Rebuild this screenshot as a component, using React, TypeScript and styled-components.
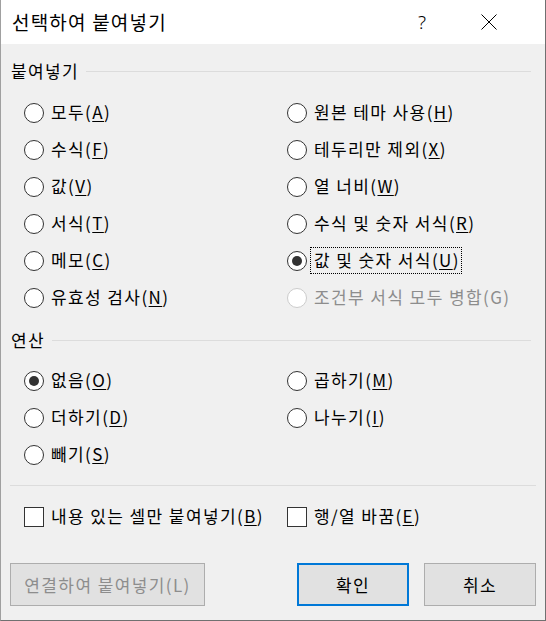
import React from "react";
import styled, { createGlobalStyle } from "styled-components";

const GlobalStyle = createGlobalStyle`
  html, body {
    margin: 0;
    padding: 0;
    background: #ffffff;
  }
  * {
    box-sizing: border-box;
  }
`;

const FONT = `"Noto Sans CJK KR", "Noto Sans", sans-serif`;

const Window = styled.div`
  width: 546px;
  height: 621px;
  display: flex;
  flex-direction: column;
  background: #f0f0f0;
  border-left: 1px solid #a0a0a0;
  border-right: 1px solid #707070;
  border-bottom: 1px solid #707070;
  font-family: ${FONT};
  color: #000;
`;

const TitleBar = styled.div`
  height: 44px;
  flex: none;
  display: flex;
  align-items: center;
  background: #ffffff;
  padding-left: 11px;
`;

const Title = styled.div`
  font-size: 19px;
  letter-spacing: 1.2px;
  line-height: 20px;
  flex: 1;
`;

const HelpButton = styled.div`
  width: 46px;
  text-align: center;
  font-family: "Noto Sans", sans-serif;
  font-weight: 300;
  font-size: 19px;
  line-height: 20px;
`;

const CloseButton = styled.div`
  width: 46px;
  height: 44px;
  display: flex;
  align-items: center;
  justify-content: center;
  margin-left: 21px;
  margin-right: 33px;
`;

const GroupHeader = styled.div<{ $top: number }>`
  display: flex;
  align-items: center;
  height: 22px;
  margin: ${(p) => p.$top}px 14px 0 10px;
  gap: 7px;
  font-size: 17px;
  letter-spacing: 1.4px;
  line-height: 22px;
`;

const Rule = styled.div`
  flex: 1;
  height: 1px;
  background: #dcdcdc;
`;

const OptionGrid = styled.div<{ $top: number; $rows: number }>`
  display: grid;
  grid-template-columns: 263px 1fr;
  grid-auto-flow: column;
  grid-template-rows: ${(p) => `repeat(${p.$rows}, 37px)`};
  margin-top: ${(p) => p.$top}px;
  padding-left: 23px;
`;

const Option = styled.div<{ $disabled?: boolean }>`
  display: flex;
  align-items: center;
  gap: 3px;
  font-size: 17px;
  letter-spacing: 1.4px;
  color: ${(p) => (p.$disabled ? "#8d8d8d" : "#000")};
`;

const RadioCircle = styled.span<{ $checked?: boolean; $disabled?: boolean }>`
  width: 20px;
  height: 20px;
  flex: none;
  border-radius: 50%;
  background: #fff;
  border: 1px solid ${(p) => (p.$disabled ? "#cccccc" : "#333")};
  display: flex;
  align-items: center;
  justify-content: center;
  &::after {
    content: "";
    display: ${(p) => (p.$checked ? "block" : "none")};
    width: 10px;
    height: 10px;
    border-radius: 50%;
    background: #333;
  }
`;

const Box = styled.span`
  width: 20px;
  height: 20px;
  flex: none;
  background: #fff;
  border: 1px solid #333;
`;

const Label = styled.span<{ $focused?: boolean }>`
  border: 1px dotted ${(p) => (p.$focused ? "#000" : "transparent")};
  padding: 2px 1px 3px 3px;
  line-height: 20px;
  white-space: nowrap;
`;

const Key = styled.span`
  text-decoration: underline;
  text-underline-offset: 2px;
`;

const Divider = styled.div`
  height: 1px;
  background: #dcdcdc;
  margin: 12px 9px 0 9px;
`;

const CheckRow = styled.div`
  display: grid;
  grid-template-columns: 263px 1fr;
  height: 37px;
  margin-top: 12px;
  padding-left: 23px;
`;

const ButtonRow = styled.div`
  display: flex;
  justify-content: space-between;
  margin-top: 28px;
  padding: 0 9px;
`;

const RightButtons = styled.div`
  display: flex;
  gap: 15px;
`;

const Button = styled.div<{ $width: number; $primary?: boolean; $disabled?: boolean }>`
  width: ${(p) => p.$width}px;
  height: 43px;
  display: flex;
  align-items: center;
  justify-content: center;
  background: #e1e1e1;
  border: ${(p) => (p.$primary ? "2px solid #0078d7" : "1px solid #adadad")};
  color: ${(p) => (p.$disabled ? "#8d8d8d" : "#000")};
  font-size: 17px;
  letter-spacing: 1.4px;
`;

type Item = {
  text: string;
  key: string;
  checked?: boolean;
  disabled?: boolean;
  focused?: boolean;
};

const pasteItems: Item[] = [
  { text: "모두", key: "A" },
  { text: "수식", key: "F" },
  { text: "값", key: "V" },
  { text: "서식", key: "T" },
  { text: "메모", key: "C" },
  { text: "유효성 검사", key: "N" },
  { text: "원본 테마 사용", key: "H" },
  { text: "테두리만 제외", key: "X" },
  { text: "열 너비", key: "W" },
  { text: "수식 및 숫자 서식", key: "R" },
  { text: "값 및 숫자 서식", key: "U", checked: true, focused: true },
  { text: "조건부 서식 모두 병합", key: "G", disabled: true },
];

const opItems: Item[] = [
  { text: "없음", key: "O", checked: true },
  { text: "더하기", key: "D" },
  { text: "빼기", key: "S" },
  { text: "곱하기", key: "M" },
  { text: "나누기", key: "I" },
];

const Radio = ({ item }: { item: Item }) => (
  <Option $disabled={item.disabled}>
    <RadioCircle $checked={item.checked} $disabled={item.disabled} />
    <Label $focused={item.focused}>
      {item.text}(
      {item.disabled ? item.key : <Key>{item.key}</Key>})
    </Label>
  </Option>
);

const CloseIcon = () => (
  <svg width="16" height="16" viewBox="0 0 16 16">
    <path d="M0.5 0.5 L15.5 15.5 M15.5 0.5 L0.5 15.5" stroke="#000" strokeWidth="1" fill="none" />
  </svg>
);

export default function App() {
  return (
    <>
      <GlobalStyle />
      <Window>
        <TitleBar>
          <Title>선택하여 붙여넣기</Title>
          <HelpButton>?</HelpButton>
          <CloseButton>
            <CloseIcon />
          </CloseButton>
        </TitleBar>

        <GroupHeader $top={16}>
          붙여넣기
          <Rule />
        </GroupHeader>
        <OptionGrid $top={12} $rows={6}>
          {pasteItems.map((it) => (
            <Radio key={it.key} item={it} />
          ))}
        </OptionGrid>

        <GroupHeader $top={13}>
          연산
          <Rule />
        </GroupHeader>
        <OptionGrid $top={11} $rows={3}>
          {opItems.map((it) => (
            <Radio key={it.key} item={it} />
          ))}
        </OptionGrid>

        <Divider />

        <CheckRow>
          <Option>
            <Box />
            <Label>
              내용 있는 셀만 붙여넣기(<Key>B</Key>)
            </Label>
          </Option>
          <Option>
            <Box />
            <Label>
              행/열 바꿈(<Key>E</Key>)
            </Label>
          </Option>
        </CheckRow>

        <ButtonRow>
          <Button $width={195} $disabled>
            연결하여 붙여넣기(L)
          </Button>
          <RightButtons>
            <Button $width={112} $primary>
              확인
            </Button>
            <Button $width={112}>취소</Button>
          </RightButtons>
        </ButtonRow>
      </Window>
    </>
  );
}
